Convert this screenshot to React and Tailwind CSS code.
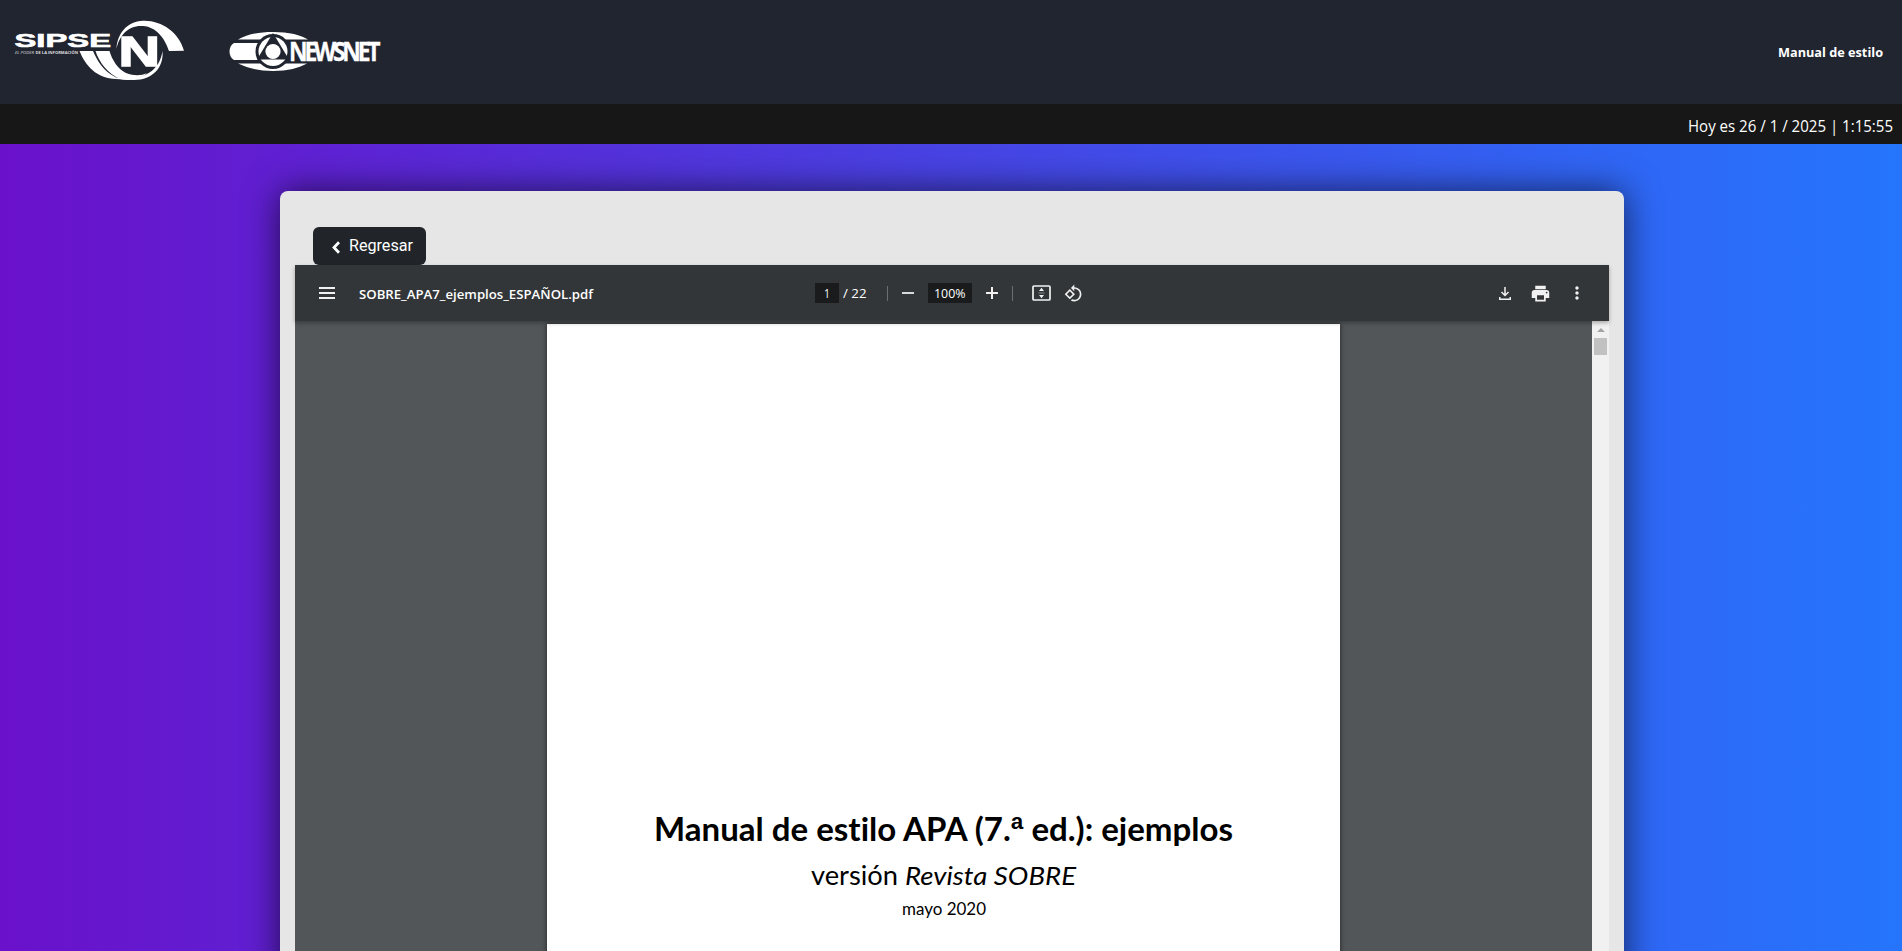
const SEGOE = "font-['Noto_Sans','Open_Sans',sans-serif]";

function Fit({ children, w, size, y, className, x = 0, anchor = 'start', ...rest }) {
  return (
    <text x={x} y={y} fontSize={size} textLength={w} lengthAdjust="spacingAndGlyphs" textAnchor={anchor} className={className} {...rest}>
      {children}
    </text>
  );
}

function SipseLogo() {
  return (
    <svg width="200" height="104" viewBox="0 0 200 104" fill="white" className="shrink-0">
      <g fontFamily="Liberation Sans, sans-serif" stroke="white">
        <Fit x={14.5} y={46.8} size={17.5} w={96.5} fontWeight="bold" strokeWidth="0.6">SIPSE</Fit>
      </g>
      <g fontFamily="Open Sans, sans-serif" fillOpacity="0.85">
        <Fit x={15} y={53.7} size={3.8} w={19} fontStyle="italic">EL PODER</Fit>
        <Fit x={35.5} y={53.7} size={3.8} w={42.5} fontWeight="bold">DE LA INFORMACIÓN</Fit>
      </g>
      <path d="M116.500 49C117 34 127 21 143 20.700C161 20 179 32 184 50.800L169 51C165 39 157 27 143 26C128 25 119 36 116.500 49Z" />
      <path d="M79.500 51H93C97 60 103 71 116 77.500L128 78.500C148 78 160 68 162.500 51C164 67 153 80 134 80C126 80 120 79 116 79C97 79 85 65 79.500 51Z" />
      <path d="M95.500 51H109.500C112 60 118 69 126 73C134 76 141 76 147 73C140 80 129 81 120 79C108 74 99 62 95.500 51Z" />
      <g fontFamily="Liberation Sans, sans-serif" stroke="white">
        <Fit x={118.500} y={65.500} size={42.500} w={41.500} fontWeight="bold" strokeWidth="1.500">N</Fit>
      </g>
    </svg>
  );
}

function NewsnetLogo() {
  return (
    <svg width="200" height="104" viewBox="0 0 200 104" fill="white" className="shrink-0">
      <path d="M28 39.500C37 34.500 48 32 63 32C79 32 91 35 98 39.500Z" />
      <path d="M28 63.500C38 68 48 71 63 71C78 71 89 68 97 63.500Z" />
      <path d="M24 43H48.500Q44 51 48.500 60H24C18 57 18 46 24 43Z" />
      <circle cx="63" cy="51.500" r="17.500" fill="#212530" />
      <circle cx="63" cy="51.500" r="14.500" />
      <path d="M63 33L79 59.500H47Z" fill="#212530" />
      <circle cx="63" cy="51.500" r="7.600" />
      <text
        transform="translate(79 60.800) scale(0.88 1)"
        fontFamily="Open Sans, sans-serif"
        fontSize="26"
        fontWeight="bold"
        stroke="white"
        strokeWidth="0.300"
        textLength="104"
        lengthAdjust="spacing"
      >
        NEWSNET
      </text>
    </svg>
  );
}

const material = {
  print: 'M19 8H5c-1.660 0-3 1.340-3 3v6h4v4h12v-4h4v-6c0-1.660-1.340-3-3-3zm-3 11H8v-5h8v5zm3-7c-.55 0-1-.45-1-1s.45-1 1-1 1 .45 1 1-.45 1-1 1zm-1-9H6v4h12V3z',
  more: 'M12 8c1.100 0 2-.9 2-2s-.9-2-2-2-2 .9-2 2 .9 2 2 2zm0 2c-1.100 0-2 .9-2 2s.9 2 2 2 2-.9 2-2-.9-2-2-2zm0 6c-1.100 0-2 .9-2 2s.9 2 2 2 2-.9 2-2-.9-2-2-2z',
  rotate: 'M7.340 6.410L.86 12.900l6.490 6.480 6.490-6.480-6.500-6.490zM3.690 12.900l3.660-3.660L11 12.900l-3.660 3.660-3.650-3.660zm15.670-6.260C17.610 4.880 15.300 4 13 4V.76L8.760 5 13 9.240V6c1.790 0 3.580.68 4.950 2.050 2.730 2.730 2.730 7.170 0 9.900C16.580 19.320 14.790 20 13 20c-.97 0-1.940-.21-2.840-.61l-1.490 1.490C10.020 21.620 11.510 22 13 22c2.300 0 4.610-.88 6.360-2.640 3.520-3.510 3.520-9.210 0-12.720z',
};

function Icon({ d, className = 'size-5' }) {
  return (
    <svg viewBox="0 0 24 24" fill="#f1f1f1" className={className}>
      <path d={d} />
    </svg>
  );
}

function Label({ w, children, size, weight, family = 'Open Sans, sans-serif', height = 20, y = 15, fill = 'white', className = '' }) {
  return (
    <svg width={w} height={height} fill={fill} fontFamily={family} fontWeight={weight} className={`shrink-0 overflow-visible ${className}`}>
      <Fit w={w} size={size} y={y}>{children}</Fit>
    </svg>
  );
}

function Toolbar() {
  return (
    <div className="relative z-10 flex h-14 items-center bg-[#323639] shadow-[0_2px_4px_rgba(0,0,0,0.3)]">
      <div className="flex flex-1 items-center pl-[24px]">
        <svg width="16" height="12" fill="#f1f1f1">
          <path d="M0 0h16v2H0zM0 5h16v2H0zM0 10h16v2H0z" />
        </svg>
        <div className="ml-[24px]">
          <Label w={234} size={13.300} y={15.500} weight="600">SOBRE_APA7_ejemplos_ESPAÑOL.pdf</Label>
        </div>
      </div>
      <div className="flex w-[276px] items-center">
        <div className="flex h-5 w-6 shrink-0 items-center justify-center bg-[#191b1c]">
          <Label w={6} size={13.500}>1</Label>
        </div>
        <div className="ml-1"><Label w={23.500} size={13.500}>/ 22</Label></div>
        <div className="ml-[20.500px] h-[15px] w-px bg-[#6c6f71]" />
        <div className="ml-[14px] h-0.5 w-3 bg-[#d8d9da]" />
        <div className="ml-[14px] flex h-5 w-11 items-center justify-center bg-[#191b1c]">
          <Label w={31.500} size={13.500}>100%</Label>
        </div>
        <svg width="12" height="12" className="ml-[14px]" fill="#f1f1f1"><path d="M5 0h2v5h5v2H7v5H5V7H0V5h5z" /></svg>
        <div className="ml-[14px] h-[15px] w-px bg-[#6c6f71]" />
        <svg width="19" height="16" viewBox="0 0 19 16" className="ml-[19px] shrink-0" fill="none" stroke="#f1f1f1">
          <rect x="1" y="1" width="17" height="14" rx="1" strokeWidth="1.700" />
          <path d="M9.500 2.800L12 6H7zM9.500 13.200L12 10H7z" fill="#f1f1f1" stroke="none" />
          <path d="M6.500 8H12.500" strokeWidth="1" stroke="#85888a" />
        </svg>
        <Icon d={material.rotate} className="ml-[13px] size-[19px] shrink-0" />
      </div>
      <div className="flex flex-1 items-center justify-end pr-[22px]">
        <svg width="12" height="13" viewBox="0 0 12 13" fill="none" stroke="#f1f1f1" strokeWidth="1.500">
          <path d="M6 0V8M2.500 5L6 8.500L9.500 5M.75 10V12.250H11.250V10" />
        </svg>
        <Icon d={material.print} className="ml-[19px] size-[21px]" />
        <Icon d={material.more} className="ml-[16px] size-5" />
      </div>
    </div>
  );
}

function PdfPage() {
  return (
    <div className="ml-[252px] mt-[3px] flex w-[793px] shrink-0 flex-col items-center bg-white pt-[479px] shadow-[0_0_5px_rgba(0,0,0,0.6)]">
      <svg width="578" height="48" fontFamily="Lato, sans-serif" fontSize="32" fontWeight="bold" className="overflow-visible [font-variant-ligatures:none]">
        <text x="-1" y="37.500" textLength="579" lengthAdjust="spacingAndGlyphs">
          Manual de estilo APA (7.<tspan fontFamily="Liberation Sans, sans-serif" fontSize="33">ª</tspan> ed.): ejemplos
        </text>
      </svg>
      <svg width="264" height="46" fontFamily="Lato, sans-serif" fontSize="26" className="overflow-visible [font-variant-ligatures:none]">
        <text x="-1" y="34" textLength="87" lengthAdjust="spacingAndGlyphs">versión</text>
        <text x="93" y="34" textLength="171" lengthAdjust="spacingAndGlyphs" fontStyle="italic">Revista SOBRE</text>
      </svg>
      <Label w={84} height={30} y={18} size={16.500} fill="black" family="Lato, sans-serif">mayo 2020</Label>
    </div>
  );
}

export default function App() {
  return (
    <div className={`flex h-[951px] flex-col overflow-hidden bg-linear-to-r/srgb from-[#6a11cb] to-[#2575fc] text-white ${SEGOE}`}>
      <header className="flex h-[104px] shrink-0 items-center bg-[#212530]">
        <SipseLogo />
        <div className="ml-[10px]"><NewsnetLogo /></div>
        <div className="ml-auto mr-[19px]">
          <Label w={105} size={13} weight="bold">Manual de estilo</Label>
        </div>
      </header>
      <div className="flex h-10 shrink-0 items-end justify-end bg-[#171717] pb-2 pr-[9px]">
        <Label w={205} size={15.800} y={16}>Hoy es 26 / 1 / 2025 | 1:15:55</Label>
      </div>
      <main className="ml-[280px] mt-[47px] flex h-[900px] w-[1344px] shrink-0 flex-col rounded-lg bg-[#e6e6e6] px-[15px] pt-9 text-black shadow-[0_0_35px_rgba(0,0,0,0.65)]">
        <button className="ml-[18px] flex h-[38px] w-[113px] shrink-0 items-center rounded-md bg-[#212529] pl-[19px]">
          <svg width="8" height="13" viewBox="0 0 8 13" fill="none" stroke="white" strokeWidth="2.800" className="mt-0.5">
            <path d="M7 1.200L2 6.500L7 11.800" />
          </svg>
          <div className="ml-[9px]"><Label w={64} size={16} family="Roboto, sans-serif">Regresar</Label></div>
        </button>
        <section className="flex h-[800px] flex-col bg-[#525659]">
          <Toolbar />
          <div className="flex min-h-0 flex-1 justify-between">
            <PdfPage />
            <div className="flex w-[17px] flex-col items-center bg-[#f1f1f1] pt-[7px]">
              <svg width="8" height="4" fill="#a3a3a3"><path d="M4 0L8 4H0z" /></svg>
              <div className="mt-[6px] h-[17px] w-[13px] bg-[#c1c1c1]" />
            </div>
          </div>
        </section>
      </main>
    </div>
  );
}
